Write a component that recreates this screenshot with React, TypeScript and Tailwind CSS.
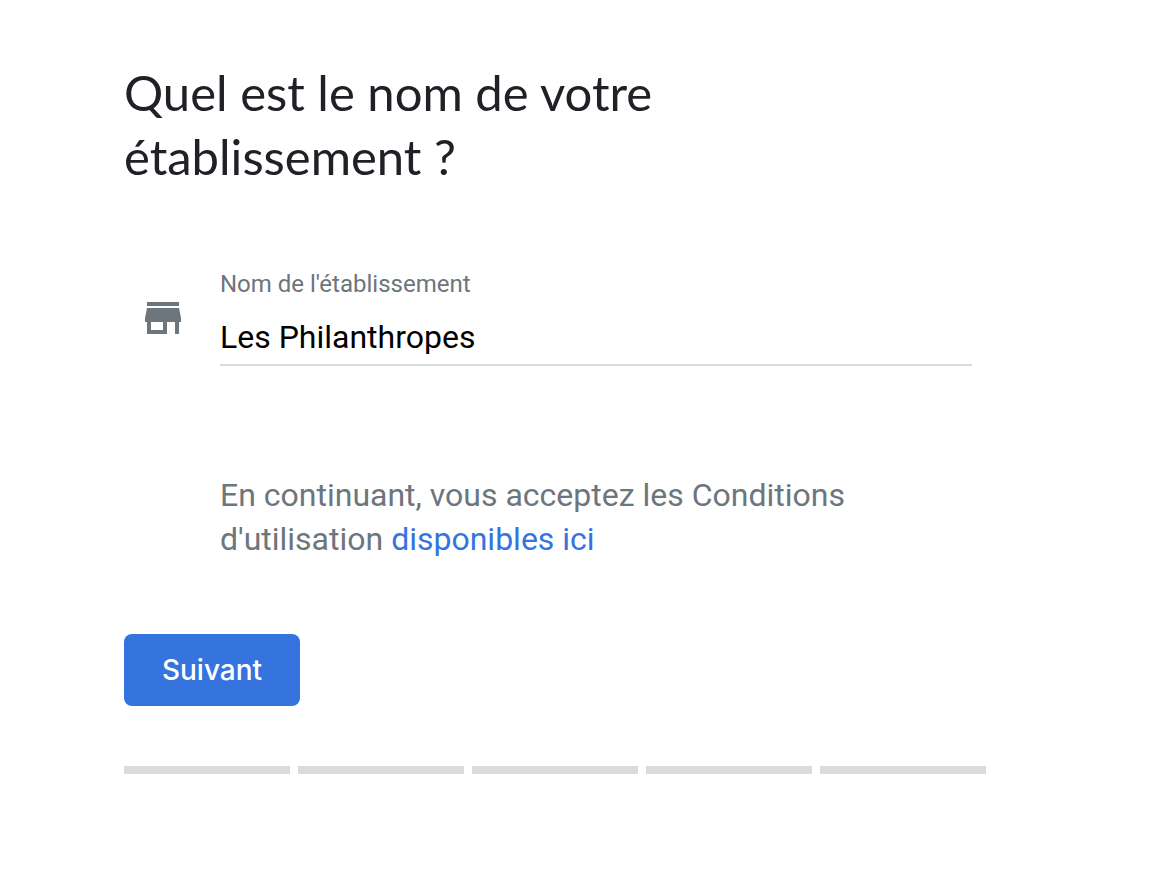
import { useState } from 'react';

const STEPS = [1, 2, 3, 4, 5];

function StoreIcon() {
  return (
    <svg viewBox="0 0 24 24" fill="currentColor" aria-hidden="true" className="mt-6 h-12 w-12 shrink-0 text-[#6d757d]">
      <path d="M20 4H4v2h16V4zm1 10v-2l-1-5H4l-1 5v2h1v6h10v-6h4v6h2v-6h1zm-9 4H6v-4h6v4z" />
    </svg>
  );
}

function StepBar() {
  return (
    <div className="mt-15 flex gap-2">
      {STEPS.map((step) => (
        <div key={step} className="h-2 flex-1 bg-[#dadbdf]" />
      ))}
    </div>
  );
}

export default function App() {
  const [name, setName] = useState('Les Philanthropes');

  return (
    <main className="min-h-screen bg-white pt-15 pr-[178px] pb-24 pl-[124px] font-['Roboto',sans-serif]">
      <form onSubmit={(e) => e.preventDefault()}>
        <h1 className="max-w-2xl font-['Lato',sans-serif] text-[49px] leading-16 text-[#202126]">
          Quel est le nom de votre établissement ?
        </h1>

        <div className="mt-[82px] flex gap-[33px] pr-[14px] pl-[15px]">
          <StoreIcon />
          <div className="min-w-0 flex-1">
            <label htmlFor="name" className="block text-2xl leading-7 text-[#6d757d]">
              Nom de l'établissement
            </label>
            <input
              id="name"
              type="text"
              value={name}
              onChange={(e) => setName(e.target.value)}
              className="mt-5 block h-12 w-full border-b-2 border-[#dadbdf] pb-2 text-[32px] leading-10 text-black outline-none"
            />
            <p className="mt-[107px] text-[32px] leading-11 text-[#6d757d]">
              En continuant, vous acceptez les Conditions d'utilisation{' '}
              <a href="#conditions" className="text-[#3574de]">
                disponibles ici
              </a>
            </p>
          </div>
        </div>

        <button
          type="submit"
          className="mt-[73px] h-18 w-44 rounded-lg bg-[#3574de] font-['Inter',sans-serif] text-[28px] font-medium text-white"
        >
          Suivant
        </button>
      </form>

      <StepBar />
    </main>
  );
}
